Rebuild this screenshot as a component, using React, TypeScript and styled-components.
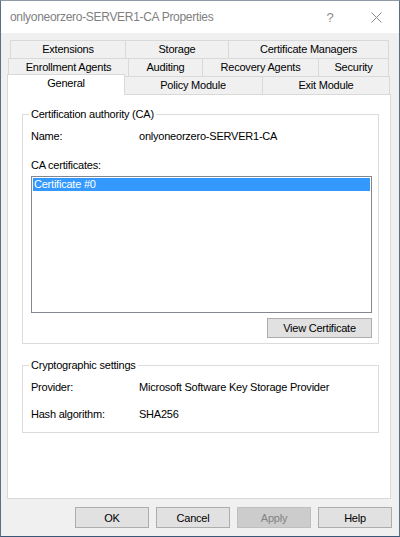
import React from 'react';
import styled, { createGlobalStyle } from 'styled-components';

const GlobalStyle = createGlobalStyle`
  html, body {
    margin: 0;
    padding: 0;
    background: #ffffff;
  }
  * {
    box-sizing: border-box;
  }
`;

interface TabDef {
  label: string;
  width: number;
  active?: boolean;
}

interface TabRowDef {
  offset: number;
  tabs: TabDef[];
}

const tabRows: TabRowDef[] = [
  {
    offset: 3,
    tabs: [
      { label: 'Extensions', width: 116 },
      { label: 'Storage', width: 104 },
      { label: 'Certificate Managers', width: 161 },
    ],
  },
  {
    offset: 1,
    tabs: [
      { label: 'Enrollment Agents', width: 121 },
      { label: 'Auditing', width: 75 },
      { label: 'Recovery Agents', width: 117 },
      { label: 'Security', width: 71 },
    ],
  },
  {
    offset: 2,
    tabs: [
      { label: 'General', width: 115, active: true },
      { label: 'Policy Module', width: 140 },
      { label: 'Exit Module', width: 128 },
    ],
  },
];

const dialogButtons = [
  { label: 'OK' },
  { label: 'Cancel' },
  { label: 'Apply', disabled: true },
  { label: 'Help' },
];

const App = () => {
  return (
    <>
      <GlobalStyle />
      <Window>
        <TitleBar>
          <Title>onlyoneorzero-SERVER1-CA Properties</Title>
          <CaptionButton>
            <HelpGlyph>?</HelpGlyph>
          </CaptionButton>
          <CaptionButton>
            <svg width="11" height="11" viewBox="0 0 11 11">
              <path d="M0.5 0.5 L10.5 10.5 M10.5 0.5 L0.5 10.5" stroke="#8a8a8a" strokeWidth="1" />
            </svg>
          </CaptionButton>
        </TitleBar>

        <Body>
          <TabStrip>
            {tabRows.map((row, i) => (
              <TabRow key={i} $offset={row.offset}>
                {row.tabs.map((tab) => (
                  <Tab key={tab.label} $width={tab.width} $active={!!tab.active}>
                    {tab.label}
                  </Tab>
                ))}
              </TabRow>
            ))}
          </TabStrip>

          <Panel>
            <GroupBox $pb={5}>
              <Legend>Certification authority (CA)</Legend>
              <InfoRow>
                <Label>Name:</Label>
                <Value>onlyoneorzero-SERVER1-CA</Value>
              </InfoRow>
              <Caption>CA certificates:</Caption>
              <ListBox>
                <ListItem $selected>Certificate #0</ListItem>
              </ListBox>
              <PushButton $width={105} $height={20} $mt={5}>
                View Certificate
              </PushButton>
            </GroupBox>

            <GroupBox $mt={14} $pb={11}>
              <Legend>Cryptographic settings</Legend>
              <InfoRow>
                <Label>Provider:</Label>
                <Value>Microsoft Software Key Storage Provider</Value>
              </InfoRow>
              <InfoRow $mt={13}>
                <Label>Hash algorithm:</Label>
                <Value>SHA256</Value>
              </InfoRow>
            </GroupBox>
          </Panel>

          <ButtonRow>
            {dialogButtons.map((b) => (
              <PushButton key={b.label} $width={74} $height={21} $disabled={!!b.disabled}>
                {b.label}
              </PushButton>
            ))}
          </ButtonRow>
        </Body>
      </Window>
    </>
  );
};

const Window = styled.div`
  width: 400px;
  height: 537px;
  display: flex;
  flex-direction: column;
  overflow: hidden;
  background: #f0f0f0;
  border: 1px solid #5b6f88;
  border-top-color: #8f9aa8;
  border-bottom-color: #3b5778;
  font-family: 'Liberation Sans', Arial, sans-serif;
  font-size: 11px;
  letter-spacing: -0.22px;
  color: #000000;
`;

const TitleBar = styled.div`
  height: 32px;
  flex: none;
  display: flex;
  align-items: center;
  background: #ffffff;
  padding-left: 9px;
`;

const Title = styled.div`
  flex: 1;
  font-size: 12px;
  letter-spacing: -0.3px;
  color: #7f7f7f;
  white-space: nowrap;
  padding-bottom: 1px;
`;

const CaptionButton = styled.div`
  width: 46px;
  height: 32px;
  display: flex;
  align-items: center;
  justify-content: center;
`;

const HelpGlyph = styled.span`
  font-size: 13px;
  color: #8a8a8a;
  letter-spacing: 0;
`;

const Body = styled.div`
  flex: 1;
  display: flex;
  flex-direction: column;
  padding: 7px 8px 8px 6px;
`;

const TabStrip = styled.div`
  display: flex;
  flex-direction: column;
`;

const TabRow = styled.div<{ $offset: number }>`
  display: flex;
  padding-left: ${({ $offset }) => $offset}px;

  & + & {
    margin-top: -1px;
  }
`;

const Tab = styled.div<{ $width: number; $active: boolean }>`
  flex: none;
  position: relative;
  width: ${({ $width, $active }) => ($active ? $width + 3 : $width)}px;
  height: ${({ $active }) => ($active ? 21 : 19)}px;
  border: 1px solid #d9d9d9;
  background: ${({ $active }) => ($active ? '#ffffff' : '#f0f0f0')};
  text-align: center;
  line-height: 17px;
  white-space: nowrap;
  z-index: ${({ $active }) => ($active ? 2 : 1)};

  & + & {
    margin-left: -1px;
  }

  ${({ $active }) =>
    $active &&
    `
    border-bottom: none;
    margin: -2px -1px -1px -2px;
    &:first-child { margin-left: -2px; }
  `}
`;

const Panel = styled.div`
  height: 405px;
  flex: none;
  margin-top: -1px;
  background: #ffffff;
  border: 1px solid #d9d9d9;
  padding: 12px 11px 0 14px;
  display: flex;
  flex-direction: column;
`;

const GroupBox = styled.fieldset<{ $mt?: number; $pb?: number }>`
  margin: ${({ $mt }) => $mt ?? 0}px 0 0 0;
  padding: 8px 6px ${({ $pb }) => $pb ?? 3}px 8px;
  border: 1px solid #dcdcdc;
  min-inline-size: 0;
  display: flex;
  flex-direction: column;
`;

const Legend = styled.legend`
  padding: 0 2px;
  margin-left: -2px;
  line-height: 14px;
  float: none;
`;

const InfoRow = styled.div<{ $mt?: number }>`
  display: grid;
  grid-template-columns: 108px 1fr;
  line-height: 14px;
  margin-top: ${({ $mt }) => $mt ?? 0}px;
`;

const Label = styled.span`
  white-space: nowrap;
`;

const Value = styled.span`
  white-space: nowrap;
`;

const Caption = styled.div`
  line-height: 14px;
  margin-top: 15px;
`;

const ListBox = styled.div`
  margin-top: 4px;
  height: 137px;
  border: 1px solid #828790;
  padding: 1px;
  background: #ffffff;
`;

const ListItem = styled.div<{ $selected?: boolean }>`
  height: 13px;
  line-height: 13px;
  padding-left: 1px;
  background: ${({ $selected }) => ($selected ? '#3399ff' : 'transparent')};
  color: ${({ $selected }) => ($selected ? '#ffffff' : '#000000')};
`;

const PushButton = styled.div<{ $width: number; $height: number; $mt?: number; $disabled?: boolean }>`
  flex: none;
  align-self: flex-end;
  width: ${({ $width }) => $width}px;
  height: ${({ $height }) => $height}px;
  margin-top: ${({ $mt }) => $mt ?? 0}px;
  display: flex;
  align-items: center;
  justify-content: center;
  background: ${({ $disabled }) => ($disabled ? '#cccccc' : '#e1e1e1')};
  border: 1px solid ${({ $disabled }) => ($disabled ? '#bfbfbf' : '#adadad')};
  color: ${({ $disabled }) => ($disabled ? '#838383' : '#000000')};
  white-space: nowrap;
`;

const ButtonRow = styled.div`
  display: flex;
  justify-content: flex-end;
  gap: 7px;
  margin-top: 8px;
  margin-right: -1px;
`;

export default App;
